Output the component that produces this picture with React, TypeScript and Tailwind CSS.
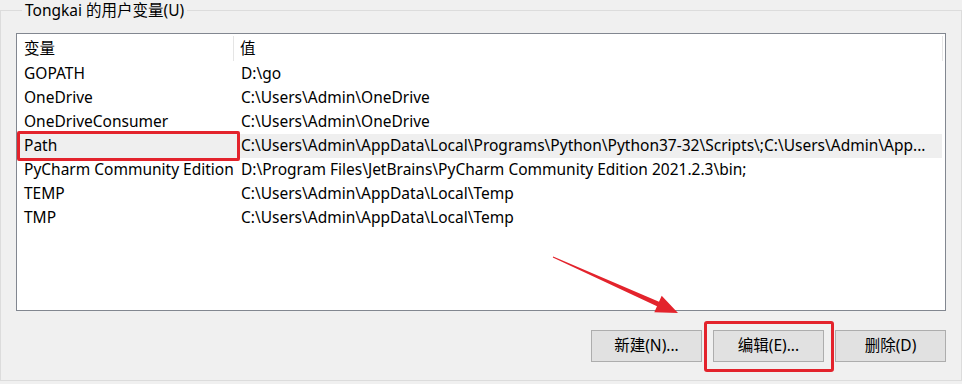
const rows = [
  { name: 'GOPATH', value: 'D:\\go' },
  { name: 'OneDrive', value: 'C:\\Users\\Admin\\OneDrive' },
  { name: 'OneDriveConsumer', value: 'C:\\Users\\Admin\\OneDrive' },
  {
    name: 'Path',
    value: 'C:\\Users\\Admin\\AppData\\Local\\Programs\\Python\\Python37-32\\Scripts\\;C:\\Users\\Admin\\App...',
    selected: true,
  },
  { name: 'PyCharm Community Edition', value: 'D:\\Program Files\\JetBrains\\PyCharm Community Edition 2021.2.3\\bin;' },
  { name: 'TEMP', value: 'C:\\Users\\Admin\\AppData\\Local\\Temp' },
  { name: 'TMP', value: 'C:\\Users\\Admin\\AppData\\Local\\Temp' },
];

function WinButton({ label }: { label: string }) {
  return (
    <button className="w-[111px] h-[32px] bg-[#e1e1e1] border border-[#adadad] text-[15.5px] text-black flex items-center justify-center">
      {label}
    </button>
  );
}

export default function App() {
  return (
    <div
      className="relative w-[962px] h-[384px] bg-[#f0f0f0] overflow-hidden text-black"
      style={{ fontFamily: '"Noto Sans", "Noto Sans CJK SC", sans-serif' }}
    >
      <fieldset className="w-[958px] h-[380px] mt-[1px] border border-[#dcdcdc] px-[15px] pt-[14px]">
        <legend className="ml-[6px] px-[3px] text-[15.5px] leading-[18px]">Tongkai 的用户变量(U)</legend>

        {/* list view */}
        <div className="w-[930px] h-[278px] bg-white border border-[#828790] pt-px">
          <div className="flex h-[27px] items-center text-[15.5px]">
            <div className="w-[217px] h-[25px] pl-[7px] flex items-center border-r border-[#e5e5e5]">变量</div>
            <div className="flex-1 pl-[6px] h-[25px] flex items-center border-r border-[#e5e5e5] mr-[2px]">值</div>
          </div>
          {rows.map((r) => (
            <div
              key={r.name}
              className={`flex h-[24px] items-center text-[15.5px] whitespace-nowrap mr-[3px] ${r.selected ? 'bg-[#efefef]' : ''}`}
            >
              <div className="w-[217px] pl-[7px] overflow-hidden">{r.name}</div>
              <div className="flex-1 pl-[7px] overflow-hidden">{r.value}</div>
            </div>
          ))}
        </div>

        <div className="flex justify-end gap-[11px] mt-[19px] w-[930px]">
          <WinButton label="新建(N)..." />
          <WinButton label="编辑(E)..." />
          <WinButton label="删除(D)" />
        </div>
      </fieldset>

      {/* red annotations */}
      <div className="absolute left-[17px] top-[131px] w-[223px] h-[30px] border-[3px] border-[#e3232c] rounded-[2px]" />
      <div className="absolute left-[704px] top-[321px] w-[130px] h-[51px] border-[3px] border-[#e3232c] rounded-[3px]" />
      <svg className="absolute left-0 top-0" width="962" height="384">
        <polygon
          points="553.2,256.5 659,301.7 661.7,295.8 678,313 654.3,312.2 657,306.3 552.8,257.5"
          fill="#e3232c"
        />
      </svg>
    </div>
  );
}
